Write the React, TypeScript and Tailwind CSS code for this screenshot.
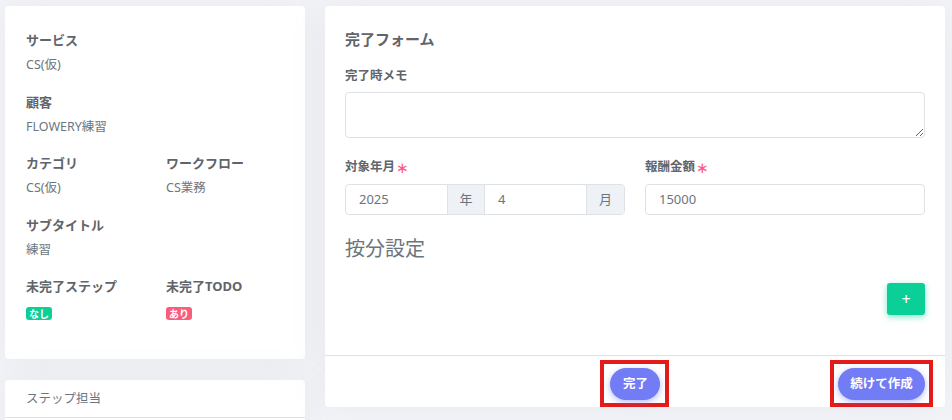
import React from 'react'

const font = { fontFamily: '"Noto Sans", "Noto Sans CJK JP", sans-serif' }

function Field({ label, children }: { label: string; children: React.ReactNode }) {
  return (
    <div className="flex flex-col">
      <div className="text-[13px] leading-[18px] font-bold text-[#5f656b]">{label}</div>
      <div className="mt-[7px] text-[12.5px] leading-[18px] text-[#6c757d]">{children}</div>
    </div>
  )
}

function Badge({ color, children }: { color: string; children: React.ReactNode }) {
  return (
    <span
      className={`inline-flex h-[13px] items-center rounded-[3px] px-[3px] text-[10px] font-bold leading-none text-white ${color}`}
    >
      {children}
    </span>
  )
}

function InfoCard() {
  return (
    <div className="rounded-[4px] bg-white pl-[21px] pr-5 pt-[25px] pb-[39px] shadow-[0_0_35px_rgba(154,161,171,0.12)]">
      <div className="flex flex-col gap-[18.5px]">
        <Field label="サービス">CS(仮)</Field>
        <Field label="顧客">FLOWERY練習</Field>
        <div className="grid grid-cols-[140px_1fr]">
          <Field label="カテゴリ">CS(仮)</Field>
          <Field label="ワークフロー">CS業務</Field>
        </div>
        <Field label="サブタイトル">練習</Field>
        <div className="grid grid-cols-[140px_1fr]">
          <div className="flex flex-col">
            <div className="text-[13px] leading-[18px] font-bold text-[#5f656b]">未完了ステップ</div>
            <div className="mt-[12px] flex">
              <Badge color="bg-[#0acf97]">なし</Badge>
            </div>
          </div>
          <div className="flex flex-col">
            <div className="text-[13px] leading-[18px] font-bold text-[#5f656b]">未完了TODO</div>
            <div className="mt-[12px] flex">
              <Badge color="bg-[#fa5c7c]">あり</Badge>
            </div>
          </div>
        </div>
      </div>
    </div>
  )
}

function StepCard() {
  return (
    <div className="rounded-t-[4px] bg-white shadow-[0_0_35px_rgba(154,161,171,0.12)]">
      <div className="flex h-[38px] items-center border-b border-[#dee2e6] pl-[21px] pt-[2px] text-[12.5px] text-[#6c757d]">
        ステップ担当
      </div>
      <div className="h-4" />
    </div>
  )
}

function Required() {
  return <span className="ml-[1px] align-middle text-[15px] leading-none font-normal text-[#fa5c7c]">∗</span>
}

function CompleteForm() {
  return (
    <div className="flex flex-col rounded-[4px] bg-white shadow-[0_0_35px_rgba(154,161,171,0.12)]">
      <div className="px-5 pt-[23px] pb-10">
        <h4 className="text-[15px] leading-[20px] font-bold text-[#5f656b]">完了フォーム</h4>
        <div className="mt-[18px] text-[12.5px] leading-[18px] font-bold text-[#5f656b]">完了時メモ</div>
        <textarea className="mt-[7px] block h-[46px] w-full rounded-[4px] border border-[#dee2e6] px-3 py-1 text-[13px] text-[#6c757d] outline-none" />
        <div className="mt-5 grid grid-cols-2 gap-5">
          <div className="flex flex-col">
            <div className="flex h-[18px] items-center text-[12.5px] font-bold text-[#5f656b]">
              対象年月
              <Required />
            </div>
            <div className="mt-2 flex h-[31px] overflow-hidden rounded-[4px] border border-[#dee2e6] text-[13px] text-[#6c757d]">
              <div className="flex flex-1 items-center pl-[13px]">2025</div>
              <div className="flex w-[38px] items-center justify-center border-x border-[#dee2e6] bg-[#eef2f7]">年</div>
              <div className="flex flex-1 items-center pl-[13px]">4</div>
              <div className="flex w-[38px] items-center justify-center border-l border-[#dee2e6] bg-[#eef2f7]">月</div>
            </div>
          </div>
          <div className="flex flex-col">
            <div className="flex h-[18px] items-center text-[12.5px] font-bold text-[#5f656b]">
              報酬金額
              <Required />
            </div>
            <div className="mt-2 flex h-[31px] items-center rounded-[4px] border border-[#dee2e6] pl-[13px] text-[13px] text-[#6c757d]">
              15000
            </div>
          </div>
        </div>
        <h3 className="mt-5 text-[20px] leading-[28px] text-[#6c757d]">按分設定</h3>
        <div className="mt-5 flex justify-end">
          <button className="flex h-8 w-[38px] items-center justify-center rounded-[3px] bg-[#0acf97] text-[16px] text-white shadow-[0_2px_6px_rgba(10,207,151,0.5)]">
            +
          </button>
        </div>
      </div>
      <div className="grid h-[52px] grid-cols-3 items-center border-t border-[#dee2e6] px-5">
        <div />
        <div className="flex justify-center">
          <div className="mt-[4px] border-4 border-[#e31b1b] pt-[4px] pb-[3px] pl-[6px] pr-[5px]">
            <button className="h-8 w-[50px] rounded-full bg-[#727cf5] text-[12.5px] font-bold text-white shadow-[0_2px_6px_rgba(114,124,245,0.5)]">
              完了
            </button>
          </div>
        </div>
        <div className="-mr-2 flex justify-end">
          <div className="mt-[4px] border-4 border-[#e31b1b] pt-[4px] pb-[3px] pl-[4px] pr-[4px]">
            <button className="h-8 w-[87px] rounded-full bg-[#727cf5] text-[12.5px] font-bold text-white shadow-[0_2px_6px_rgba(114,124,245,0.5)]">
              続けて作成
            </button>
          </div>
        </div>
      </div>
    </div>
  )
}

export default function App() {
  return (
    <div className="h-[420px] w-[952px] overflow-hidden bg-[#f3f4f8] pt-[6px] pl-[5px]" style={font}>
      <div className="flex items-start gap-5">
        <div className="flex w-[300px] flex-col gap-[21px]">
          <InfoCard />
          <StepCard />
        </div>
        <div className="w-[620px]">
          <CompleteForm />
        </div>
      </div>
    </div>
  )
}
